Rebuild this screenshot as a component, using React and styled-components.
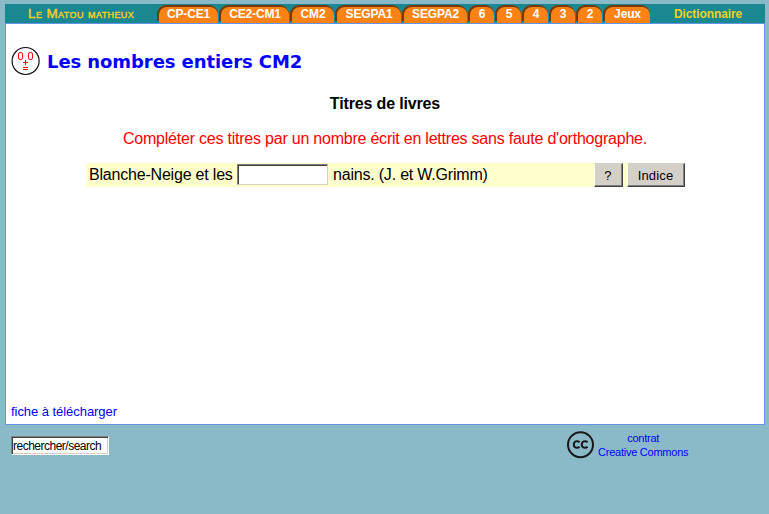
import React from 'react';
import styled, { createGlobalStyle } from 'styled-components';

const GlobalStyle = createGlobalStyle`
  * { box-sizing: border-box; }
  body {
    margin: 0;
    background: #8abac8;
    font-family: "Liberation Sans", Arial, sans-serif;
    overflow: hidden;
  }
`;

const Page = styled.div`
  width: 769px;
  height: 514px;
  padding: 4px 4px 0 5px;
`;

const Header = styled.header`
  display: flex;
  height: 19px;
  background: #1a8891;
  color: #f2d022;
  font-size: 12px;
  line-height: 19px;
`;

const Brand = styled.div`
  width: 152px;
  padding-left: 23px;
  font-variant: small-caps;
  font-size: 13.5px;
  letter-spacing: 0.4px;
  -webkit-text-stroke: 0.4px #f2d022;
  white-space: nowrap;
`;

const Tabs = styled.nav`
  display: flex;
  gap: 1px;
  padding-top: 1px;
`;

const Tab = styled.a`
  width: ${(p) => p.$w}px;
  height: 18px;
  padding-top: 2px;
  padding-left: 2px;
  border-radius: 9px 9px 0 0;
  color: #fff;
  background: linear-gradient(#74380a, #74380a) 0 0 / 100% 16px no-repeat;
`;

const TabFace = styled.span`
  display: block;
  height: 16px;
  border-radius: 8px 8px 0 0;
  background: #fb8316;
  font-weight: bold;
  line-height: 14px;
  letter-spacing: -0.15px;
  text-align: center;
  white-space: nowrap;
`;

const Dictionary = styled.a`
  margin-left: 24px;
  padding-top: 1px;
  font-weight: bold;
  letter-spacing: -0.1px;
`;

const Sheet = styled.main`
  display: flex;
  flex-direction: column;
  height: 402px;
  border: 1px solid #6495ed;
  background: #fff;
`;

const TitleRow = styled.div`
  display: flex;
  align-items: flex-start;
  gap: 7px;
  height: 29px;
  margin: 22px 0 0 5px;
`;

const Title = styled.h1`
  margin: 0 0 0 -1px;
  padding-top: 5px;
  color: #0000ff;
  font: bold 18px/22px "DejaVu Sans", Verdana, sans-serif;
  letter-spacing: -0.08px;
`;

const Subtitle = styled.h2`
  margin: 20px 0 0;
  font-size: 16px;
  line-height: 18px;
  letter-spacing: -0.15px;
  text-align: center;
`;

const Instruction = styled.p`
  margin: 17px 0 0;
  color: #ff0000;
  font-size: 16px;
  line-height: 18px;
  letter-spacing: -0.222px;
  text-align: center;
`;

const Question = styled.form`
  display: flex;
  width: 599px;
  height: 24px;
  margin: 15px 0 0 80px;
  padding-left: 3px;
  background: #ffffcc;
  font-size: 16px;
  line-height: 23px;
  letter-spacing: -0.2px;
  white-space: nowrap;
`;

const Prompt = styled.span`
  flex: none;
  width: 148px;
`;

const Field = styled.input`
  flex: none;
  height: ${(p) => p.$h}px;
  width: ${(p) => p.$w}px;
  margin: 0;
  padding: 0 0 0 1px;
  border: 1px solid;
  border-color: #808080 #d4d0c8 #d4d0c8 #808080;
  border-radius: 0;
  outline: none;
  background: #fff;
  box-shadow: inset 1px 1px 0 #404040;
  font: 12px/14px "Liberation Sans", Arial, sans-serif;
  letter-spacing: ${(p) => p.$track || 0}px;
`;

const AnswerField = styled(Field)`
  margin-top: 1px;
`;

const Ending = styled.span`
  flex: none;
  width: 266px;
  padding-left: 5px;
`;

const PushButton = styled.button`
  width: ${(p) => p.$w}px;
  height: 24px;
  margin: 0 4px 0 0;
  padding: 2px 1px 0 0;
  border: 1px solid;
  border-color: #d4d0c8 #404040 #404040 #fff;
  border-radius: 0;
  background: #d4d0c8;
  box-shadow: inset -1px -1px 0 #808080;
  font: 13px/20px "Liberation Sans", Arial, sans-serif;
  letter-spacing: 0.15px;
  flex: none;
`;

const Download = styled.a`
  margin: auto 0 4px 5px;
  color: #0000ff;
  font-size: 13px;
  line-height: 16px;
  letter-spacing: -0.05px;
`;

const Footer = styled.footer`
  display: flex;
  height: 60px;
  padding: 6px 0 0 6px;
`;

const SearchField = styled(Field)`
  margin-top: 5px;
  border-color: #808080 #fff #fff #808080;
  box-shadow: inset 1px 1px 0 #404040, inset -1px -1px 0 #d4d0c8;
`;

const License = styled.a`
  display: flex;
  gap: 4px;
  margin-left: 458px;
  color: #0000ff;
  font-size: 11px;
  line-height: 14px;
  letter-spacing: -0.24px;
  text-align: center;
`;

function Face() {
  return (
    <svg width="30" height="30" viewBox="0 0 30 30">
      <circle cx="14.6" cy="15" r="13.5" fill="#fff" stroke="#111" strokeWidth="1.2" />
      <g fill="none" stroke="#ff0000">
        <rect x="7.5" y="6.5" width="4" height="7" rx="1.6" />
        <rect x="17.5" y="6.5" width="4" height="7" rx="1.6" />
        <path d="M12 16.5h5M14.5 14v5M12 21.5h5M12 23.5h5" />
      </g>
    </svg>
  );
}

function CreativeCommons() {
  return (
    <svg width="27" height="28" viewBox="0 0 27 28">
      <circle cx="13.5" cy="13.7" r="12.5" fill="none" stroke="#181818" strokeWidth="2" />
      <path
        d="M12.6 11.2C10.5 9.4 6.8 10 6.8 13.5S10.5 17.6 12.6 15.8M20.6 11.2C18.5 9.4 14.8 10 14.8 13.5S18.5 17.6 20.6 15.8"
        fill="none"
        stroke="#181818"
        strokeWidth="2"
      />
    </svg>
  );
}

const tabs = [
  ['CP-CE1', 61], ['CE2-CM1', 70], ['CM2', 44], ['SEGPA1', 66], ['SEGPA2', 65],
  ['6', 26], ['5', 26], ['4', 26], ['3', 26], ['2', 26], ['Jeux', 47],
];

export default function App() {
  return (
    <>
      <GlobalStyle />
      <Page>
        <Header>
          <Brand>Le Matou matheux</Brand>
          <Tabs>
            {tabs.map(([label, w]) => (
              <Tab key={label} $w={w}><TabFace>{label}</TabFace></Tab>
            ))}
          </Tabs>
          <Dictionary>Dictionnaire</Dictionary>
        </Header>
        <Sheet>
          <TitleRow>
            <Face />
            <Title>Les nombres entiers CM2</Title>
          </TitleRow>
          <Subtitle>Titres de livres</Subtitle>
          <Instruction>Compléter ces titres par un nombre écrit en lettres sans faute d'orthographe.</Instruction>
          <Question>
            <Prompt>Blanche-Neige et les</Prompt>
            <AnswerField $w={91} $h={21} />
            <Ending>nains. (J. et W.Grimm)</Ending>
            <PushButton type="button" $w={29}>?</PushButton>
            <PushButton type="button" $w={58}>Indice</PushButton>
          </Question>
          <Download>fiche à télécharger</Download>
        </Sheet>
        <Footer>
          <SearchField $w={98} $h={19} $track={-0.5} defaultValue="rechercher/search" />
          <License>
            <CreativeCommons />
            <span>contrat<br />Creative Commons</span>
          </License>
        </Footer>
      </Page>
    </>
  );
}
